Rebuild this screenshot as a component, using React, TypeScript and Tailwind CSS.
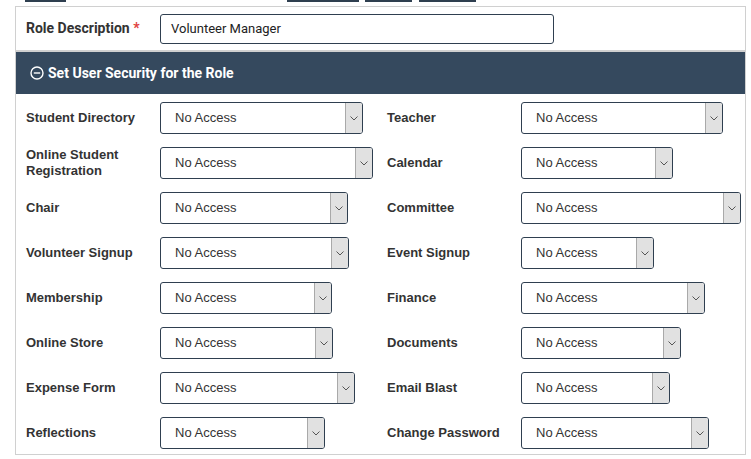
import React from "react";

type Perm = { label: string; width: number };

const left: Perm[] = [
  { label: "Student Directory", width: 203 },
  { label: "Online Student Registration", width: 213 },
  { label: "Chair", width: 188 },
  { label: "Volunteer Signup", width: 189 },
  { label: "Membership", width: 172 },
  { label: "Online Store", width: 173 },
  { label: "Expense Form", width: 195 },
  { label: "Reflections", width: 165 },
];

const right: Perm[] = [
  { label: "Teacher", width: 202 },
  { label: "Calendar", width: 152 },
  { label: "Committee", width: 220 },
  { label: "Event Signup", width: 133 },
  { label: "Finance", width: 184 },
  { label: "Documents", width: 160 },
  { label: "Email Blast", width: 149 },
  { label: "Change Password", width: 188 },
];

function FakeSelect({ width }: { width: number }) {
  return (
    <div
      className="flex h-[32px] shrink-0 items-stretch overflow-hidden rounded-[3px] border border-[#2f3f50] bg-white"
      style={{ width }}
    >
      <div className="flex flex-1 items-center pl-[14px] text-[13px] text-[#333] font-['Liberation_Sans',Arial,sans-serif]">
        No Access
      </div>
      <div className="flex w-[17px] items-center justify-center border-l border-[#a9a9a9] bg-[#e1e1e1]">
        <svg width="8" height="5" viewBox="0 0 8 5" fill="none">
          <path d="M0.5 0.5 L4 4 L7.5 0.5" stroke="#555" strokeWidth="1" />
        </svg>
      </div>
    </div>
  );
}

function PermRow({ p }: { p: Perm }) {
  return (
    <div className="flex items-center pl-[10px]">
      <div className="w-[134px] shrink-0 pr-2 text-[13px] font-bold leading-[16px] text-[#333] font-['Liberation_Sans',Arial,sans-serif]">
        {p.label}
      </div>
      <FakeSelect width={p.width} />
    </div>
  );
}

export default function App() {
  return (
    <div className="h-[459px] w-[751px] overflow-hidden bg-white font-['Roboto',sans-serif]">
      {/* cut-off buttons from above */}
      <div className="relative h-[6px]">
        <div className="absolute left-[25px] top-0 h-[2px] w-[41px] bg-[#2f3f50]" />
        <div className="absolute left-[287px] top-0 h-[2px] w-[72px] bg-[#2f3f50]" />
        <div className="absolute left-[365px] top-0 h-[2px] w-[47px] bg-[#2f3f50]" />
        <div className="absolute left-[419px] top-0 h-[2px] w-[57px] bg-[#2f3f50]" />
      </div>

      <div className="ml-[15px] w-[731px] border border-[#d0d0d0]">
        <div className="flex h-[43px] items-center pl-[10px]">
          <div className="w-[134px] text-[14px] font-bold text-[#333]">
            Role Description <span className="text-[#e04040]">*</span>
          </div>
          <div className="flex h-[30px] w-[394px] items-center rounded-[3px] border border-[#2f3f50] pl-[10px] text-[13px] text-[#222]">
            Volunteer Manager
          </div>
        </div>

        <div className="flex h-[44px] items-center border-t-2 border-[#d0d0d0] bg-[#35495e] pl-[14px] text-[14px] font-bold text-white">
          <svg width="14" height="14" viewBox="0 0 14 14" fill="none" className="mr-[4px]">
            <circle cx="7" cy="7" r="6" stroke="white" strokeWidth="1.4" />
            <path d="M3.8 7 H10.2" stroke="white" strokeWidth="1.4" />
          </svg>
          Set User Security for the Role
        </div>

        <div className="flex pt-[8px] pb-[5px]">
          <div className="flex w-[361px] flex-col gap-[13px]">
            {left.map((p) => (
              <PermRow key={p.label} p={p} />
            ))}
          </div>
          <div className="flex flex-1 flex-col gap-[13px]">
            {right.map((p) => (
              <PermRow key={p.label} p={p} />
            ))}
          </div>
        </div>
      </div>
    </div>
  );
}
